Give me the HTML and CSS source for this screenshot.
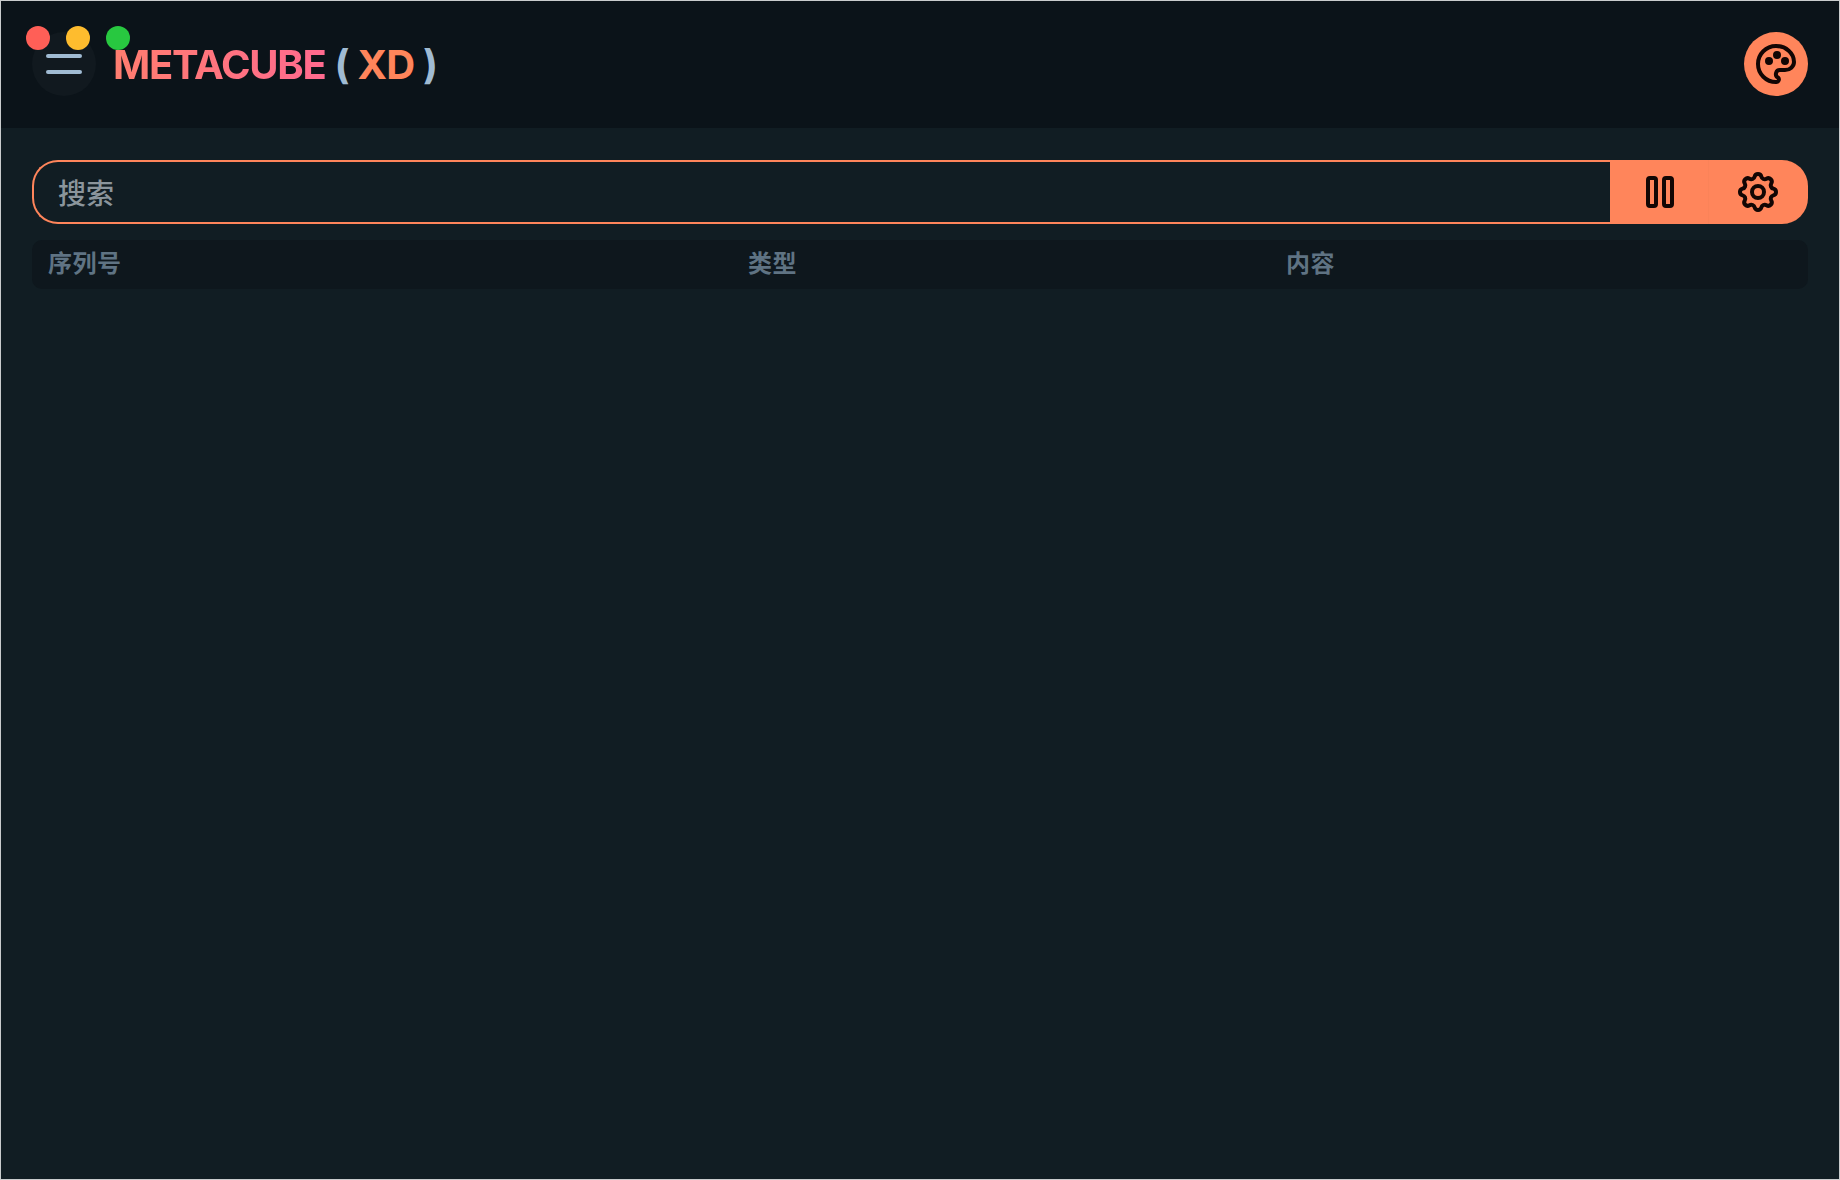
FILE: index.html
```html
<!DOCTYPE html>
<html lang="zh-CN">
<head>
    <meta charset="UTF-8">
    <meta name="viewport" content="width=device-width, initial-scale=1.0">
    <title>METACUBE (XD) - 连接</title>
    <link rel="stylesheet" href="styles.css">
</head>
<body>

    <div class="window">
        <div class="traffic">
            <span class="light red"></span>
            <span class="light yellow"></span>
            <span class="light green"></span>
        </div>

        <div class="header">
            <button class="menu-btn">
                <span class="menu-line"></span>
                <span class="menu-line"></span>
            </button>
            <div class="logo">
                <span class="logo-name">METACUBE</span>
                <span class="logo-paren">(</span>
                <span class="logo-xd">XD</span>
                <span class="logo-paren">)</span>
            </div>
            <button class="theme-btn">
                <svg class="icon" viewBox="0 0 24 24">
                    <path d="M12 21a9 9 0 0 1 0 -18c4.97 0 9 3.582 9 8c0 1.06 -.474 2.078 -1.318 2.828c-.844 .75 -1.989 1.172 -3.182 1.172h-2.5a2 2 0 0 0 -1 3.75a1.3 1.3 0 0 1 -1 2.25"/>
                    <circle cx="8.5" cy="10.5" r="1"/>
                    <circle cx="12.5" cy="7.5" r="1"/>
                    <circle cx="16.5" cy="10.5" r="1"/>
                </svg>
            </button>
        </div>

        <div class="content">
            <div class="search">
                <input class="search-input" type="text" placeholder="搜索">
                <button class="search-btn pause-btn">
                    <svg class="icon" viewBox="0 0 24 24">
                        <rect x="6" y="5" width="4" height="14" rx="1"/>
                        <rect x="14" y="5" width="4" height="14" rx="1"/>
                    </svg>
                </button>
                <button class="search-btn settings-btn">
                    <svg class="icon" viewBox="0 0 24 24">
                        <path d="M10.325 4.317c.426 -1.756 2.924 -1.756 3.35 0a1.724 1.724 0 0 0 2.573 1.066c1.543 -.94 3.31 .826 2.37 2.37a1.724 1.724 0 0 0 1.065 2.572c1.756 .426 1.756 2.924 0 3.35a1.724 1.724 0 0 0 -1.066 2.573c.94 1.543 -.826 3.31 -2.37 2.37a1.724 1.724 0 0 0 -2.572 1.065c-.426 1.756 -2.924 1.756 -3.35 0a1.724 1.724 0 0 0 -2.573 -1.066c-1.543 .94 -3.31 -.826 -2.37 -2.37a1.724 1.724 0 0 0 -1.065 -2.572c-1.756 -.426 -1.756 -2.924 0 -3.35a1.724 1.724 0 0 0 1.066 -2.573c-.94 -1.543 .826 -3.31 2.37 -2.37c1 .608 2.296 .07 2.572 -1.065z"/>
                        <circle cx="12" cy="12" r="3"/>
                    </svg>
                </button>
            </div>

            <div class="table-head">
                <div class="cell">序列号</div>
                <div class="cell">类型</div>
                <div class="cell">内容</div>
            </div>
        </div>
    </div>

</body>
</html>
```

FILE: styles.css
```css
* {
    box-sizing: border-box;
}
body {
    margin: 0;
    font-family: Inter, "Noto Sans CJK SC", sans-serif;
    background-color: #111d23;
}
button {
    border: none;
    padding: 0;
    cursor: pointer;
}
.window {
    position: relative;
    display: flex;
    flex-direction: column;
    height: 1180px;
    border: 1px solid #c9cccd;
    background-color: #111d23;
}
.traffic {
    position: absolute;
    top: 25px;
    left: 25px;
    display: flex;
    gap: 16px;
}
.light {
    width: 24px;
    height: 24px;
    border-radius: 50%;
}
.light.red { background-color: #ff5f57; }
.light.yellow { background-color: #febc2e; }
.light.green { background-color: #28c840; }

.header {
    display: flex;
    align-items: center;
    height: 127px;
    padding: 0 31px 1px;
    background-color: #0b1319;
}
.menu-btn {
    display: flex;
    flex-direction: column;
    align-items: center;
    justify-content: center;
    gap: 12px;
    width: 64px;
    height: 64px;
    border-radius: 50%;
    background-color: #11191f;
}
.menu-line {
    width: 36px;
    height: 4px;
    border-radius: 2px;
    background-color: #a0bbd3;
}
.logo {
    display: flex;
    gap: 9px;
    margin-top: 2px;
    margin-left: 17px;
    margin-right: auto;
    font-size: 40px;
    font-weight: 700;
    letter-spacing: -1px;
    line-height: 48px;
}
.logo-name {
    letter-spacing: -1.25px;
    color: transparent;
    background: linear-gradient(90deg, #ff7d6f, #ff6a8f);
    -webkit-background-clip: text;
    background-clip: text;
}
.logo-paren { color: #a0bbd3; }
.logo-xd { color: #ff855b; }
.theme-btn {
    display: flex;
    align-items: center;
    justify-content: center;
    width: 64px;
    height: 64px;
    border-radius: 50%;
    background-color: #ff855b;
}
.icon {
    width: 48px;
    height: 48px;
    fill: none;
    stroke: #120604;
    stroke-width: 2;
    stroke-linecap: round;
    stroke-linejoin: round;
}

.content {
    flex: 1;
    padding: 32px 31px;
}
.search {
    display: flex;
    height: 64px;
}
.search-input {
    flex: 1;
    min-width: 0;
    padding: 3px 24px 0;
    border: 2px solid #ff855b;
    border-right: none;
    border-radius: 26px 0 0 26px;
    outline: none;
    font-family: inherit;
    font-size: 28px;
    font-weight: 500;
    color: #a6adb2;
    background-color: #111d23;
}
.search-input::placeholder {
    color: #8b959c;
    opacity: 1;
}
.search-btn {
    display: flex;
    align-items: center;
    justify-content: center;
    background-color: #ff855b;
}
.pause-btn {
    width: 98px;
    padding-left: 2px;
}
.settings-btn {
    width: 100px;
    border-radius: 0 26px 26px 0;
    box-shadow: inset 1px 0 0 #fa8359;
}

.table-head {
    display: grid;
    grid-template-columns: 700px 538px 1fr;
    height: 49px;
    margin-top: 16px;
    border-radius: 10px;
    background-color: #0e171d;
}
.cell {
    padding: 0 16px;
    font-size: 24px;
    font-weight: 700;
    letter-spacing: 0.5px;
    line-height: 48px;
    color: #5f7383;
}
```
